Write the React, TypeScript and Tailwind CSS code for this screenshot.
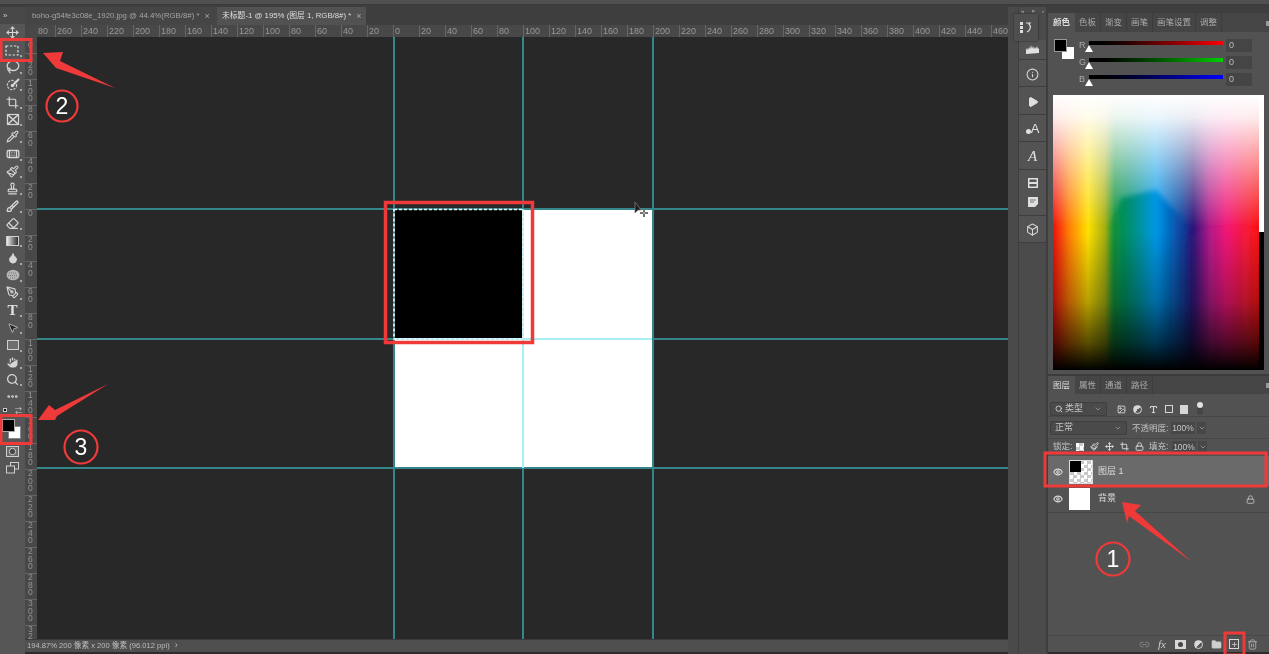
import React from "react";
import {
  Move, Lasso, Crop, Pipette, Bandage, Paintbrush, Stamp, Brush, Eraser, Droplet, PenTool, MousePointer2, Hand, Search,
  Ellipsis, Info, Play, Box, Image as ImageIcon, Type, Lock, Eye, Link2, Trash2, Folder, ChevronDown, Plus,
} from "lucide-react";

const FONT = "font-['Liberation_Sans','Noto_Sans_CJK_SC',sans-serif]";
const ic = "text-[#d6d6d6]";

function Marquee() {
  return (
    <svg width="15" height="13" viewBox="0 0 15 13" className="text-[#dcdcdc]">
      <rect x="1" y="2" width="12" height="9" fill="none" stroke="currentColor" strokeWidth="1.2" strokeDasharray="2.4 1.6" />
    </svg>
  );
}
function QuickSelect() {
  return (
    <svg width="14" height="13" viewBox="0 0 14 13" className="text-[#d6d6d6]">
      <circle cx="6" cy="7" r="4.6" fill="none" stroke="currentColor" strokeWidth="1.2" strokeDasharray="2.2 1.2" />
      <path d="M13 1L7.5 6.5" stroke="currentColor" strokeWidth="2.2" />
      <circle cx="6.5" cy="7.5" r="1.8" fill="currentColor" />
    </svg>
  );
}
function FrameTool() {
  return (
    <svg width="14" height="13" viewBox="0 0 14 13" className="text-[#d6d6d6]">
      <rect x="1.5" y="1.5" width="11" height="10" fill="none" stroke="currentColor" strokeWidth="1.2" />
      <path d="M1.5 1.5l11 10M12.5 1.5l-11 10" stroke="currentColor" strokeWidth="1.6" />
    </svg>
  );
}
function GradientTool() {
  return <div className="h-[10px] w-[13px] border border-[#cfcfcf] bg-gradient-to-r from-[#eeeeee] to-[#333333]" />;
}
function Smudge() {
  return (
    <svg width="14" height="12" viewBox="0 0 14 12">
      <ellipse cx="7" cy="6" rx="6.5" ry="5.2" fill="#b4b4b4" />
      <path d="M3 4h8M2 6.5h10M4 9h6" stroke="#777" strokeWidth="1" strokeDasharray="1 1" />
    </svg>
  );
}
function RectTool() {
  return <div className="h-[10px] w-[12px] border border-[#d0d0d0] bg-[#6e6e6e]" />;
}
function MaskMode() {
  return (
    <svg width="13" height="11" viewBox="0 0 13 11">
      <rect x="0.5" y="0.5" width="12" height="10" fill="#6a6a6a" stroke="#cfcfcf" />
      <circle cx="6.5" cy="5.5" r="3.2" fill="#444" stroke="#cfcfcf" />
    </svg>
  );
}
function ScreenMode() {
  return (
    <svg width="13" height="12" viewBox="0 0 13 12">
      <rect x="4.5" y="0.5" width="8" height="6.5" fill="#555" stroke="#d0d0d0" />
      <rect x="0.5" y="4" width="8" height="7" fill="#555" stroke="#d0d0d0" />
    </svg>
  );
}

const tools: React.ReactNode[] = [
  <Move size={13} strokeWidth={2} className={ic} />,
  <Marquee />,
  <Lasso size={14} strokeWidth={2.2} className={ic} />,
  <QuickSelect />,
  <Crop size={13} strokeWidth={2.2} className={ic} />,
  <FrameTool />,
  <Pipette size={13} strokeWidth={2} className={ic} />,
  <Bandage size={14} strokeWidth={2.2} className={ic} />,
  <Paintbrush size={13} strokeWidth={2} className={ic} />,
  <Stamp size={13} strokeWidth={2.2} className={ic} />,
  <Brush size={13} strokeWidth={2.4} className={ic} />,
  <Eraser size={13} strokeWidth={2.2} className={ic} />,
  <GradientTool />,
  <Droplet size={12} fill="#d6d6d6" className={ic} />,
  <Smudge />,
  <PenTool size={13} strokeWidth={2} className={ic} />,
  <span className="font-['Liberation_Serif',serif] text-[15px] font-bold leading-none text-[#e2e2e2]">T</span>,
  <MousePointer2 size={12} fill="#222222" strokeWidth={1.5} className={ic} />,
  <RectTool />,
  <Hand size={13} fill="#d6d6d6" strokeWidth={1.5} className="text-[#555]" />,
  <Search size={13} strokeWidth={2.4} className={ic} />,
  <Ellipsis size={13} strokeWidth={3} className={ic} />,
];

function Toolbar() {
  return (
    <div className="flex w-[25px] shrink-0 flex-col items-center bg-[#565656]">
      <div className="flex h-[17px] w-full items-center bg-[#484848] pl-[3px] text-[8px] leading-none text-[#c8c8c8]">»</div>
      <div className="flex w-full flex-col">
        {tools.map((t, i) => (
          <div key={i} className="relative flex h-[17.35px] w-full items-center justify-center">
            {t}
            {i > 0 && i < 21 && <div className="absolute bottom-[2px] right-[3px] h-[2px] w-[2px] bg-[#a8a8a8]" />}
          </div>
        ))}
      </div>
      <div className="flex h-[9px] w-full items-center justify-between px-[3px]">
        <div className="h-[4px] w-[4px] border border-[#ccc] bg-black" />
        <div className="text-[7px] leading-none text-[#ccc]">⇄</div>
      </div>
      <div className="relative ml-[-2px] mt-[4px] h-[20px] w-[19px]">
        <div className="absolute bottom-0 right-0 h-[13px] w-[13px] border border-[#888] bg-white" />
        <div className="absolute left-0 top-0 h-[13px] w-[13px] border border-[#aaa] bg-black" />
      </div>
      <div className="mt-[4px] flex h-[17px] items-center"><MaskMode /></div>
      <div className="flex h-[17px] items-center"><ScreenMode /></div>
    </div>
  );
}

const hLabels = ["260","240","220","200","180","160","140","120","100","80","60","40","20","0","20","40","60","80","100","120","140","160","180","200","220","240","260","280","300","320","340","360","380","400","420","440","460"];

function HRuler() {
  return (
    <div className="flex h-[12px] shrink-0 overflow-hidden bg-[#484848] text-[9px] leading-[12px] text-[#989898]">
      <div className="w-[12px] shrink-0" />
      <div className="w-[18px] shrink-0 pl-[1px]">80</div>
      {hLabels.map((l, i) => (
        <div key={i} className="w-[26px] shrink-0 border-l border-[#666666] pl-[1px]">{l}</div>
      ))}
    </div>
  );
}

const vLabels = ["120","100","80","60","40","20","0","20","40","60","80","100","120","140","160","180","200","220","240","260","280","300"];

function VRuler() {
  return (
    <div className="flex w-[12px] shrink-0 flex-col overflow-hidden bg-[#484848] text-[8.5px] leading-[7.6px] text-[#949494]">
      <div className="h-[16px] shrink-0 pl-[3px] pt-[5px]">0</div>
      {vLabels.map((l, i) => (
        <div key={i} className="h-[26px] shrink-0 border-t border-[#666666] pl-[3px]">
          {l.split("").map((d, j) => <div key={j}>{d}</div>)}
        </div>
      ))}
      <div className="min-h-0 flex-1 border-t border-[#666666] pl-[3px] leading-[6.6px]">
        <div>3</div>
        <div>2</div>
      </div>
    </div>
  );
}

function Canvas() {
  return (
    <div className="relative min-w-0 flex-1 overflow-hidden bg-[#282828]">
      <div className="absolute left-[356px] top-[172px] h-[259px] w-[260px] bg-white" />
      <div className="absolute left-[356px] top-[172px] h-[130px] w-[130px] bg-black" />
      <div className="absolute left-[356px] top-0 h-full w-[2px] bg-[#35868b]" />
      <div className="absolute left-[485px] top-0 h-full w-[2px] bg-[#35868b]" />
      <div className="absolute left-[615px] top-0 h-full w-[2px] bg-[#35868b]" />
      <div className="absolute left-0 top-[171px] h-[2px] w-full bg-[#35868b]" />
      <div className="absolute left-0 top-[301px] h-[2px] w-full bg-[#35868b]" />
      <div className="absolute left-0 top-[430px] h-[2px] w-full bg-[#35868b]" />
      <div className="absolute left-[485px] top-[302px] h-[129px] w-[2px] bg-[#a8eef6]" />
      <div className="absolute left-[357px] top-[301px] h-[2px] w-[258px] bg-[#a8eef6]" />
      <div className="absolute left-[485px] top-[172px] h-[130px] w-[2px] bg-[#a8eef6]" />
      <svg width="132" height="133" viewBox="0 0 132 133" className="absolute left-[356px] top-[171px]">
        <rect x="1" y="1.5" width="129" height="129.5" fill="none" stroke="#f4f4f4" strokeWidth="1.6" strokeDasharray="3 2" />
      </svg>
      <svg width="14" height="18" viewBox="0 0 14 18" className="absolute left-[597px] top-[164px]">
        <path d="M1 1v11l3-3 3 0z" fill="#1c1c1c" stroke="#777" strokeWidth="0.8" />
        <path d="M10 8v8M6 12h8" stroke="#222" strokeWidth="2" />
        <path d="M10 8v8M6 12h8" stroke="#eee" strokeWidth="0.8" />
      </svg>
    </div>
  );
}

function Tabs() {
  return (
    <div className="flex h-[18px] shrink-0 items-stretch bg-[#3e3e3e] text-[7.8px] leading-[18px]">
      <div className="flex w-[192px] items-center gap-[5px] bg-[#454545] pl-[7px] text-[#a4a4a4]">
        <span className="whitespace-nowrap">boho-g54fe3c08e_1920.jpg @ 44.4%(RGB/8#) *</span>
        <span className="text-[9px]">×</span>
      </div>
      <div className="flex w-[149px] items-center gap-[5px] bg-[#525252] pl-[5px] text-[#dedede]">
        <span className="whitespace-nowrap">未标题-1 @ 195% (图层 1, RGB/8#) *</span>
        <span className="text-[9px] text-[#aaa]">×</span>
      </div>
    </div>
  );
}

function DocArea() {
  return (
    <div className="flex min-h-0 min-w-0 flex-1 flex-col">
      <Tabs />
      <HRuler />
      <div className="flex min-h-0 flex-1">
        <VRuler />
        <Canvas />
      </div>
      <div className="flex h-[13px] shrink-0 items-center gap-[1px] border-t border-[#3a3a3a] bg-[#4f4f4f] pl-[2px] text-[7.6px] text-[#bdbdbd]">
        <span className="whitespace-nowrap">194.87% 200 像素 x 200 像素 (96.012 ppi)</span>
        <span className="ml-[4px] text-[9px]">›</span>
      </div>
    </div>
  );
}

function DockBtn({ children }: { children: React.ReactNode }) {
  return (
    <div className="flex h-[27.4px] w-full items-center justify-center border-b border-[#3e3e3e] bg-[#535353] pt-[2px]">
      {children}
    </div>
  );
}

function Dock() {
  return (
    <div className="flex w-[29px] shrink-0 flex-col border-x border-[#3e3e3e] bg-[#4b4b4b]">
      <div className="flex h-[7px] items-center justify-between px-[2px] text-[6px] leading-none text-[#bbb]">
        <span>»</span><span>×</span><span>‹</span>
      </div>
      <div className="relative h-[26px]" />
      <div className="flex h-[20px] w-full items-center justify-center border-b border-[#3e3e3e] bg-[#535353]">
        <svg width="14" height="9" viewBox="0 0 14 9"><path d="M0 9V5l1-2 1 2 1-3 1 2 1-4 1 4 1-3 1 3 1-2 1 2 1-3 1 3 1-1v5z" fill="#e0e0e0" /></svg>
      </div>
      <DockBtn><Info size={13} className={ic} strokeWidth={2} /></DockBtn>
      <DockBtn><Play size={12} fill="#e0e0e0" className="text-[#e0e0e0]" /></DockBtn>
      <DockBtn><span className="flex items-end text-[13px] leading-none text-[#e0e0e0]"><span className="mb-[1px] h-[5px] w-[5px] rounded-full bg-[#e0e0e0]" />A</span></DockBtn>
      <DockBtn><span className="font-['Liberation_Serif',serif] text-[15px] italic leading-none text-[#e0e0e0]">A</span></DockBtn>
      <div className="flex h-[46px] w-full flex-col items-center justify-center gap-[9px] border-b border-[#3e3e3e] bg-[#535353]">
        <svg width="10" height="10" viewBox="0 0 10 10"><rect width="10" height="10" fill="#e0e0e0" /><rect x="1.5" y="1.5" width="7" height="2.5" fill="#555" /><rect x="1.5" y="6" width="7" height="2.5" fill="#555" /></svg>
        <svg width="10" height="10" viewBox="0 0 10 10"><path d="M0 0h10v7l-3 3H0z" fill="#e0e0e0" /><path d="M2 3h6M2 5h4" stroke="#777" /></svg>
      </div>
      <DockBtn><Box size={13} className={ic} strokeWidth={2} /></DockBtn>
      <div className="flex-1" />
      <div className="absolute left-[1014px] top-[14px] flex h-[27px] w-[24px] items-center justify-center gap-[2px] bg-[#4f4f4f] shadow-[0_0_2px_#2a2a2a]">
        <div className="flex flex-col gap-px">
          <div className="h-[3px] w-[3px] bg-[#ddd]" /><div className="h-[3px] w-[3px] bg-[#ddd]" /><div className="h-[3px] w-[3px] bg-[#ddd]" />
        </div>
        <svg width="7" height="11" viewBox="0 0 7 11"><path d="M1 1h4l-1 1c2 2 2 6-2 8" fill="none" stroke="#ddd" strokeWidth="1.2" /></svg>
      </div>
    </div>
  );
}

function Spectrum() {
  return (
    <div className="relative mx-auto mt-[6px] flex h-[275px] w-[211px] bg-white">
      <svg width="206" height="275" viewBox="0 0 206 275" className="block shrink-0">
        <defs>
          <linearGradient id="hue" gradientUnits="userSpaceOnUse" x1="0" y1="0" x2="206" y2="0">
            <stop offset="0" stopColor="#f00e0e" />
            <stop offset="0.08" stopColor="#ff8005" />
            <stop offset="0.17" stopColor="#ffe000" />
            <stop offset="0.25" stopColor="#a8b010" />
            <stop offset="0.3" stopColor="#0a903a" />
            <stop offset="0.38" stopColor="#008f78" />
            <stop offset="0.5" stopColor="#0098e8" />
            <stop offset="0.62" stopColor="#0a449e" />
            <stop offset="0.68" stopColor="#2c1478" />
            <stop offset="0.76" stopColor="#b01a88" />
            <stop offset="0.84" stopColor="#f01878" />
            <stop offset="0.95" stopColor="#f81a30" />
            <stop offset="1" stopColor="#f81010" />
          </linearGradient>
          <linearGradient id="wh" x1="0" y1="0" x2="0" y2="1">
            <stop offset="0" stopColor="#fff" stopOpacity="1" />
            <stop offset="0.08" stopColor="#fff" stopOpacity="0.92" />
            <stop offset="0.3" stopColor="#fff" stopOpacity="0.4" />
            <stop offset="0.48" stopColor="#fff" stopOpacity="0" />
          </linearGradient>
          <linearGradient id="bk" x1="0" y1="0" x2="0" y2="1">
            <stop offset="0.5" stopColor="#000" stopOpacity="0" />
            <stop offset="0.75" stopColor="#000" stopOpacity="0.28" />
            <stop offset="0.9" stopColor="#000" stopOpacity="0.65" />
            <stop offset="1" stopColor="#000" stopOpacity="1" />
          </linearGradient>
          <filter id="soft" x="-10%" y="-10%" width="120%" height="120%"><feGaussianBlur stdDeviation="2.5" /></filter>
        </defs>
        <rect width="206" height="275" fill="url(#hue)" />
        <rect width="206" height="275" fill="url(#wh)" />
        <path d="M60 280V130l8-27 35-8 25 28 10 30v127z" fill="url(#hue)" filter="url(#soft)" />
        <path d="M138 280V140l40-8 32 4v144z" fill="url(#hue)" filter="url(#soft)" />
        <rect width="206" height="275" fill="url(#bk)" />
      </svg>
      <div className="flex w-[5px] flex-col">
        <div className="h-[137px] bg-white" />
        <div className="flex-1 bg-black" />
      </div>
    </div>
  );
}

const sliders = [
  { l: "R", c: "bg-gradient-to-r from-black to-[#ff0000]" },
  { l: "G", c: "bg-gradient-to-r from-black to-[#00d000]" },
  { l: "B", c: "bg-gradient-to-r from-black to-[#0000ff]" },
];

const colorTabs = ["色板", "渐变", "画笔", "画笔设置", "调整"];

function ColorPanel() {
  return (
    <div className="flex h-[363px] shrink-0 flex-col border-b-2 border-[#3c3c3c] bg-[#525252]">
      <div className="flex h-[19px] shrink-0 items-stretch bg-[#454545] text-[8.5px] leading-[19px] text-[#aaa]">
        <div className="w-[27px] shrink-0 whitespace-nowrap bg-[#525252] pl-[5px] font-bold text-[#ddd]">颜色</div>
        {colorTabs.map((t) => (
          <div key={t} className="shrink-0 whitespace-nowrap border-r border-[#3c3c3c] px-[4px]">{t}</div>
        ))}
        <div className="ml-auto mt-[8px] h-[5px] w-[3px] bg-[#999]" />
      </div>
      <div className="flex h-[57px] shrink-0 pl-[6px] pt-[6px]">
        <div className="relative mt-px h-[20px] w-[20px] shrink-0">
          <div className="absolute bottom-0 right-0 h-[12px] w-[12px] bg-white" />
          <div className="absolute left-0 top-0 h-[13px] w-[13px] border border-[#999] bg-black" />
        </div>
        <div className="ml-[5px] flex flex-col gap-[5px]">
          {sliders.map((s) => (
            <div key={s.l} className="flex h-[12px] items-center text-[9px] text-[#aaa]">
              <span className="w-[10px] pt-[3px] leading-none">{s.l}</span>
              <div className="relative h-[4px] w-[134px] -translate-y-[1px]">
                <div className={`h-full w-full ${s.c}`} />
                <div className="absolute left-[-4px] top-[4px] h-0 w-0 border-x-[4px] border-b-[7px] border-x-transparent border-b-white" />
              </div>
              <div className="ml-[3px] h-[13px] w-[26px] translate-y-px bg-[#454545] pl-[3px] text-[9px] leading-[13px] text-[#bbb]">0</div>
            </div>
          ))}
        </div>
      </div>
      <Spectrum />
    </div>
  );
}

function Sel({ w, children }: { w: string; children: React.ReactNode }) {
  return (
    <div className={`flex h-[14px] items-center justify-between rounded-[1px] border border-[#3f3f3f] bg-[#4a4a4a] px-[4px] text-[9px] text-[#c4c4c4] ${w}`}>
      <span className="flex items-center gap-[2px]">{children}</span>
      <ChevronDown size={8} className="text-[#aaa]" />
    </div>
  );
}

function Pct() {
  return (
    <div className="flex items-center gap-[2px]">
      <div className="h-[12px] w-[24px] bg-[#474747] text-center text-[8.5px] leading-[12px] text-[#c8c8c8]">100%</div>
      <div className="flex h-[12px] w-[9px] items-center justify-center bg-[#474747]"><ChevronDown size={8} className="text-[#aaa]" /></div>
    </div>
  );
}

function Checker() {
  return <div className="h-full w-full bg-white bg-[conic-gradient(#c8c8c8_25%,#ffffff_0_50%,#c8c8c8_0_75%,#ffffff_0)] bg-[length:7px_7px]" />;
}

function BarCell({ children }: { children: React.ReactNode }) {
  return <div className="flex w-[18px] shrink-0 items-center justify-center">{children}</div>;
}

function LayersPanel() {
  return (
    <div className="flex min-h-0 flex-1 flex-col bg-[#525252] text-[8.5px] text-[#c4c4c4]">
      <div className="flex h-[18px] shrink-0 items-stretch bg-[#454545] leading-[18px] text-[#aaa]">
        <div className="w-[27px] shrink-0 whitespace-nowrap bg-[#525252] pl-[5px] text-[#ddd]">图层</div>
        {["属性", "通道", "路径"].map((t) => (
          <div key={t} className="shrink-0 whitespace-nowrap border-r border-[#3c3c3c] px-[4px]">{t}</div>
        ))}
        <div className="ml-auto mt-[7px] h-[5px] w-[3px] bg-[#999]" />
      </div>
      <div className="flex h-[23px] shrink-0 items-center border-b border-[#474747] pl-[2px] pt-[8px]">
        <Sel w="w-[57px]"><Search size={8} strokeWidth={3} />类型</Sel>
        <div className="ml-[10px] flex items-center gap-[7px] text-[#d6d6d6]">
          <ImageIcon size={9} strokeWidth={2.4} />
          <div className="h-[9px] w-[9px] rounded-full border border-[#d6d6d6] bg-[linear-gradient(135deg,#d6d6d6_50%,#555_50%)]" />
          <Type size={9} strokeWidth={3} />
          <div className="h-[8px] w-[8px] border border-[#d6d6d6]" />
          <div className="h-[9px] w-[8px] bg-[#d6d6d6]" />
        </div>
        <div className="relative ml-[9px] h-[12px] w-[6px] rounded-[3px] bg-[#454545]">
          <div className="absolute -top-[1px] left-0 h-[6px] w-[6px] rounded-full bg-[#e2e2e2]" />
        </div>
      </div>
      <div className="flex h-[22px] shrink-0 items-center border-b border-[#474747] pl-[2px] pt-[1px]">
        <Sel w="w-[77px]">正常</Sel>
        <span className="ml-[5px] w-[39px] whitespace-nowrap">不透明度:</span>
        <Pct />
      </div>
      <div className="flex h-[17px] shrink-0 items-center pb-[2px] pl-[5px]">
        <span className="w-[22px] whitespace-nowrap">锁定:</span>
        <div className="ml-[1px] flex items-center gap-[6px] text-[#d6d6d6]">
          <div className="h-[8px] w-[8px]"><Checker /></div>
          <Paintbrush size={9} strokeWidth={2.6} />
          <Move size={9} strokeWidth={2.6} />
          <Crop size={9} strokeWidth={2.6} />
          <Lock size={9} strokeWidth={2.6} />
        </div>
        <span className="ml-[5px] w-[23px] whitespace-nowrap">填充:</span>
        <Pct />
      </div>
      <div className="flex h-[30px] shrink-0 items-center bg-[#6a6a6a] pt-[2px]">
        <Eye size={10} strokeWidth={2.6} className="ml-[5px] text-[#d8d8d8]" />
        <div className="ml-[6px] h-[24px] w-[24px] border border-[#ddd] bg-white">
          <div className="relative h-full w-full">
            <Checker />
            <div className="absolute left-0 top-0 h-[11px] w-[11px] bg-black" />
          </div>
        </div>
        <span className="ml-[5px] text-[9px] text-[#ddd]">图层 1</span>
      </div>
      <div className="flex h-[27px] shrink-0 items-center border-b border-[#474747]">
        <Eye size={10} strokeWidth={2.6} className="ml-[5px] text-[#d8d8d8]" />
        <div className="ml-[6px] h-[22px] w-[21px] bg-white" />
        <span className="ml-[8px] text-[9px] text-[#ddd]">背景</span>
        <Lock size={9} strokeWidth={2.4} className="ml-auto mr-[14px] text-[#bbb]" />
      </div>
      <div className="flex-1" />
      <div className="flex h-[17px] shrink-0 items-center justify-end border-t border-[#484848] pr-[8px] text-[#c4c4c4]">
        <BarCell><Link2 size={11} className="text-[#888]" /></BarCell>
        <BarCell><span className="font-['Liberation_Serif',serif] text-[11px] italic leading-none text-[#ccc]">fx</span></BarCell>
        <BarCell><svg width="11" height="9" viewBox="0 0 11 9"><rect width="11" height="9" fill="#d8d8d8" /><circle cx="5.5" cy="4.5" r="2.5" fill="#444" /></svg></BarCell>
        <BarCell><div className="h-[9px] w-[9px] rounded-full border border-[#d8d8d8] bg-[linear-gradient(135deg,#d8d8d8_50%,#555_50%)]" /></BarCell>
        <BarCell><Folder size={11} fill="#cfcfcf" strokeWidth={1} /></BarCell>
        <BarCell><div className="flex h-[10px] w-[10px] items-center justify-center border border-[#d8d8d8]"><Plus size={7} strokeWidth={3} /></div></BarCell>
        <BarCell><Trash2 size={11} className="text-[#aaa]" /></BarCell>
      </div>
      <div className="h-[2px] shrink-0 bg-[#2c2c2c]" />
    </div>
  );
}

function Annotations() {
  const R = "#f03a3a";
  return (
    <svg width="1269" height="654" viewBox="0 0 1269 654" className="pointer-events-none absolute left-0 top-0">
      <g fill="none" stroke={R}>
        <rect x="1" y="39.5" width="30" height="21" strokeWidth="3" />
        <rect x="1" y="415.5" width="30" height="28" strokeWidth="3" />
        <rect x="385.5" y="202.5" width="147" height="140" strokeWidth="3.5" />
        <rect x="1045" y="453" width="221" height="33" strokeWidth="3" />
        <rect x="1225" y="633" width="19" height="22" strokeWidth="3" />
        <circle cx="62" cy="106" r="15.5" strokeWidth="2.2" />
        <circle cx="81" cy="447" r="16.5" strokeWidth="2.2" />
        <circle cx="1113" cy="559" r="16.5" strokeWidth="2.2" />
      </g>
      <g fill="#f03a3a">
        <polygon points="43,53 63,52 60,61 115,88 56,68" />
        <polygon points="38,420 49,405 55,410 108,384 57,416 55,420" />
        <polygon points="1122,502 1141,505 1135,511 1192,562 1129,516 1127,523" />
      </g>
    </svg>
  );
}

function Nums() {
  const base = "absolute text-[23px] leading-none text-white -translate-x-1/2 -translate-y-1/2";
  return (
    <>
      <span className={`${base} left-[62px] top-[106px]`}>2</span>
      <span className={`${base} left-[81px] top-[447px]`}>3</span>
      <span className={`${base} left-[1113px] top-[559px]`}>1</span>
    </>
  );
}

export default function App() {
  return (
    <div className={`relative flex h-[654px] w-[1269px] flex-col overflow-hidden bg-[#4e4e4e] blur-[0.4px] ${FONT}`}>
      <div className="h-[5px] shrink-0 border-b border-[#3a3a3a] bg-[#505050]" />
      <div className="flex min-h-0 flex-1 bg-[#3e3e3e] pt-[2px]">
        <Toolbar />
        <div className="flex w-[983px] min-w-0 flex-col">
          <div className="flex min-h-0 flex-1 flex-col">
            <DocArea />
          </div>
          <div className="h-[2px] shrink-0 bg-[#2c2c2c]" />
        </div>
        <div className="w-[10px] shrink-0 bg-[#4a4a4a]" />
        <Dock />
        <div className="flex min-w-0 flex-1 flex-col border-l border-[#3e3e3e] pt-[6px]">
          <ColorPanel />
          <LayersPanel />
        </div>
      </div>
      <Annotations />
      <Nums />
    </div>
  );
}
